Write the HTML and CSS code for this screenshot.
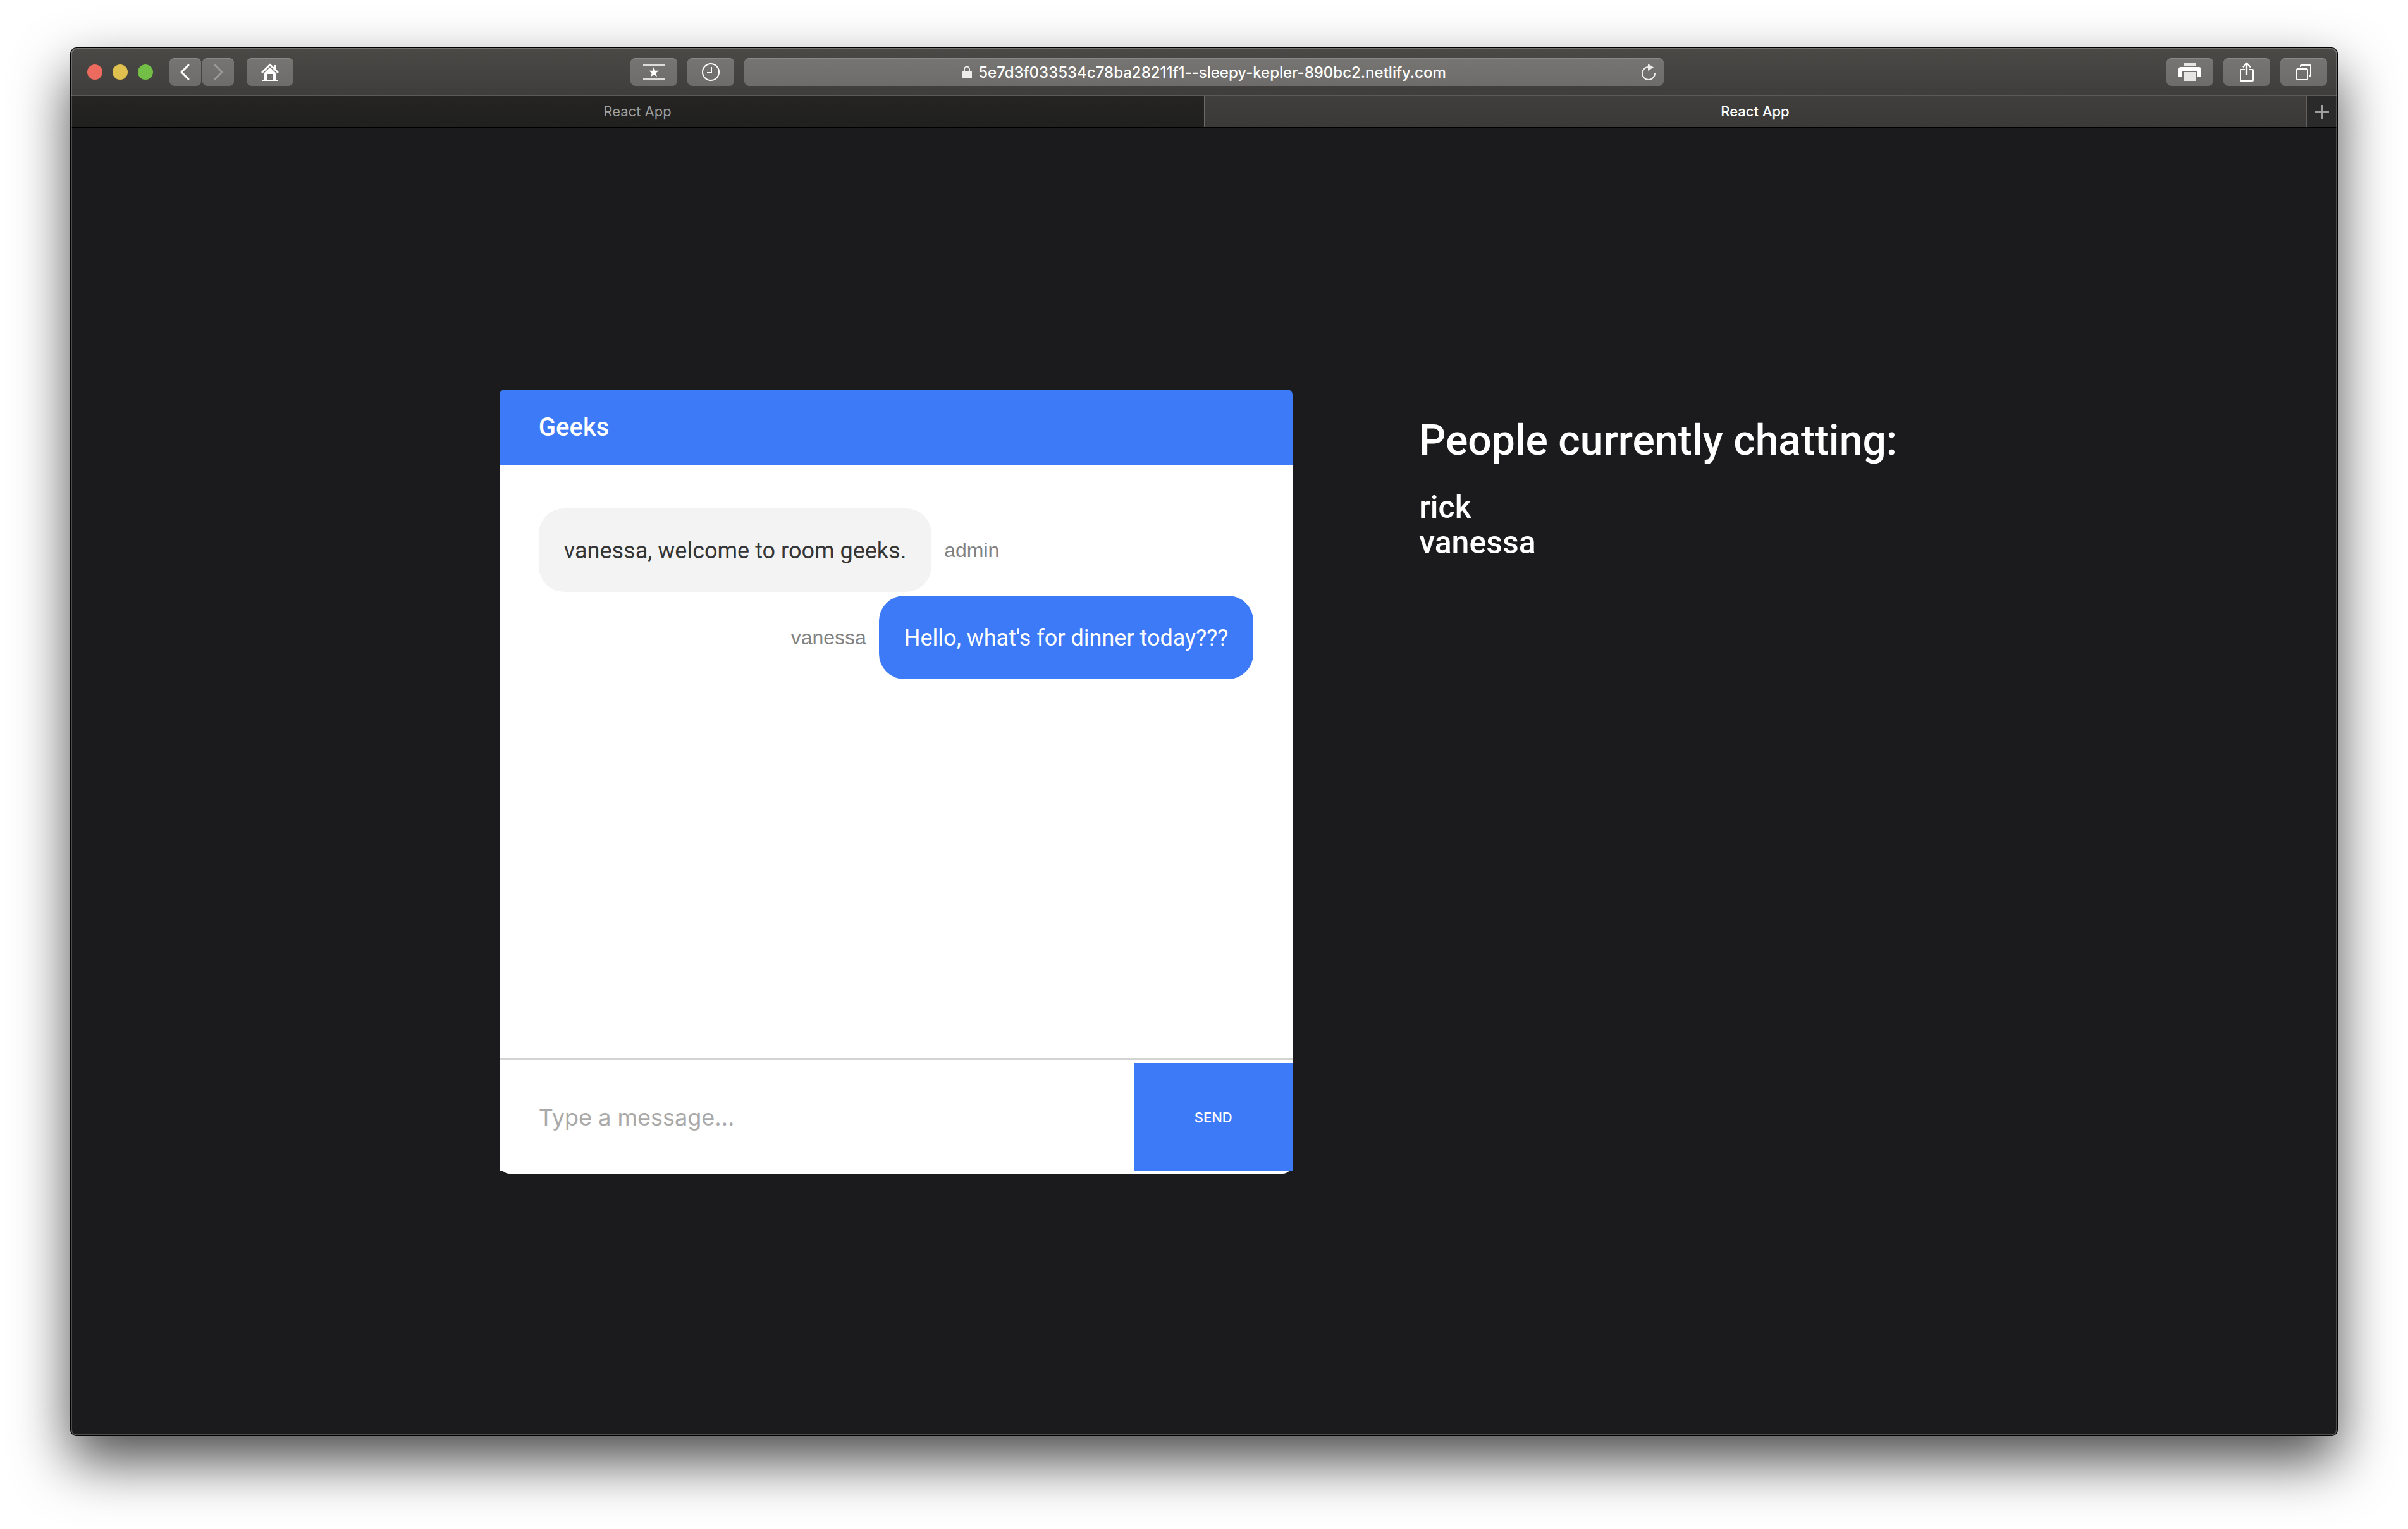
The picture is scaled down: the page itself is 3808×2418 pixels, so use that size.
FILE: index.html
```html
<!DOCTYPE html>
<html lang="en">
<head>
<meta charset="utf-8">
<title>React App</title>
<link rel="stylesheet" href="styles.css">
</head>
<body>
<div class="window">
  <header class="toolbar">
    <div class="toolbar-side">
      <div class="lights">
        <span class="light light-close"></span>
        <span class="light light-minimise"></span>
        <span class="light light-zoom"></span>
      </div>
      <div class="history-nav">
        <button class="tool tool-narrow" type="button" aria-label="Back">
          <svg width="28" height="28" viewBox="0 0 28 28"><path d="M19 3 8 14l11 11" fill="none" stroke="#fff" stroke-width="3" stroke-linecap="round" stroke-linejoin="round"/></svg>
        </button>
        <button class="tool tool-narrow" type="button" aria-label="Forward" disabled>
          <svg width="28" height="28" viewBox="0 0 28 28"><path d="M9 3 20 14 9 25" fill="none" stroke="#9c9b9a" stroke-width="3" stroke-linecap="round" stroke-linejoin="round"/></svg>
        </button>
      </div>
      <button class="tool" type="button" aria-label="Home">
        <svg width="28" height="28" viewBox="0 0 28 28"><path d="M2 14 14 2.500 26 14" fill="none" stroke="#fff" stroke-width="3" stroke-linecap="round"/><path d="M20 3h4v8l-4-4z" fill="#fff"/><path d="M14 6.500 24 16v10h2v2H2v-2h2V16z M10 17v9h8v-9z" fill="#fff" fill-rule="evenodd"/><circle cx="16.500" cy="21.500" r="0.800" fill="#fff"/></svg>
      </button>
      <button class="tool push-right" type="button" aria-label="Favourites">
        <svg width="34" height="28" viewBox="0 0 34 28"><path d="M0 3h34M0 25h34" stroke="#dddcdb" stroke-width="2"/><path d="m17 6 2 5.800h6l-4.800 3.700 1.800 6-5-3.500-5 3.500 1.800-6L9 11.800h6z" fill="#fff"/></svg>
      </button>
      <button class="tool" type="button" aria-label="History">
        <svg width="28" height="28" viewBox="0 0 28 28"><circle cx="14" cy="14" r="13" fill="none" stroke="#fff" stroke-width="2"/><path d="M15 6v9H8" fill="none" stroke="#fff" stroke-width="2"/></svg>
      </button>
    </div>
    <div class="address">
      <label class="address-field">
        <svg width="16" height="20" viewBox="0 0 16 20" aria-label="Secure"><path d="M4 9V5.500a4 4 0 0 1 8 0V9" fill="none" stroke="#ececeb" stroke-width="2"/><rect x="1" y="8" width="15" height="12" rx="1" fill="#ececeb"/></svg>
        <input class="address-input" type="text" aria-label="Address" value="5e7d3f033534c78ba28211f1--sleepy-kepler-890bc2.netlify.com">
      </label>
      <button class="reload" type="button" aria-label="Reload">
        <svg width="22" height="26" viewBox="0 0 22 26"><path d="M11 5a10 10 0 1 0 10 10v-1" fill="none" stroke="#ececeb" stroke-width="2"/><path d="M10 0v11l9-5.500z" fill="#ececeb"/></svg>
      </button>
    </div>
    <div class="toolbar-side toolbar-end">
      <button class="tool" type="button" aria-label="Print">
        <svg width="36" height="28" viewBox="0 0 36 28"><path d="M8 0h20v4H8zM8 14h20v14H8z" fill="#e6e5e4"/><path d="M0 22V10q0-4 4-4h28q4 0 4 4v12h-6V12H6v10z" fill="#fff"/></svg>
      </button>
      <button class="tool" type="button" aria-label="Share">
        <svg width="24" height="32" viewBox="0 0 24 32"><path d="M9 12H3q-1 0-1 1v16q0 1 1 1h18q1 0 1-1V13q0-1-1-1h-6" fill="none" stroke="#fff" stroke-width="2"/><path d="M12 21V3M6 8.500 12 2l6 6.500" fill="none" stroke="#fff" stroke-width="2.300"/></svg>
      </button>
      <button class="tool" type="button" aria-label="Tab overview">
        <svg width="24" height="26" viewBox="0 0 24 26"><rect x="1" y="8" width="17" height="17" rx="1.500" fill="none" stroke="#fff" stroke-width="2"/><path d="M7 5V3q0-1 1-1h14q1 0 1 1v15q0 1-1 1h-2" fill="none" stroke="#fff" stroke-width="2"/></svg>
      </button>
    </div>
  </header>
  <nav class="tabs" aria-label="Tabs">
    <button class="tab" type="button">React App</button>
    <div class="tabs-end">
      <button class="tab tab-active" type="button">React App</button>
      <button class="new-tab" type="button" aria-label="New tab">
        <svg width="22" height="22" viewBox="0 0 22 22"><path d="M11 0v22M0 11h22" stroke="#a09f9e" stroke-width="2"/></svg>
      </button>
    </div>
  </nav>
  <main class="page">
    <section class="chat">
      <h3 class="chat-title">Geeks</h3>
      <div class="messages">
        <div class="message">
          <p class="bubble">vanessa, welcome to room geeks.</p>
          <p class="sender">admin</p>
        </div>
        <div class="message message-own">
          <p class="sender">vanessa</p>
          <p class="bubble bubble-own">Hello, what's for dinner today???</p>
        </div>
      </div>
      <form class="composer">
        <input class="composer-input" type="text" placeholder="Type a message..." aria-label="Message">
        <button class="send" type="button">SEND</button>
      </form>
    </section>
    <aside class="people">
      <h1 class="people-title">People currently chatting:</h1>
      <ul class="people-list">
        <li>rick</li>
        <li>vanessa</li>
      </ul>
    </aside>
  </main>
</div>
</body>
</html>
```
FILE: styles.css
```css
* {
  box-sizing: border-box;
}

body {
  margin: 0;
  min-height: 100vh;
  padding: 75px 111px 147px;
  display: flex;
  background: #fff;
  font-family: Roboto, sans-serif;
}

h1,
h3,
p,
ul {
  margin: 0;
  padding: 0;
}

button,
input {
  margin: 0;
  padding: 0;
  border: 0;
  outline: 0;
  background: none;
  color: inherit;
  font-family: Inter, sans-serif;
}

svg {
  display: block;
  flex: none;
}

/* Browser window */
.window {
  flex: 1;
  position: relative;
  display: flex;
  flex-direction: column;
  border: 1px solid #000;
  border-radius: 10px;
  overflow: hidden;
  background: #1b1b1d;
  box-shadow: 0 40px 88px rgba(0, 0, 0, 0.7);
}

.window::after {
  content: "";
  position: absolute;
  inset: 0;
  border-radius: 9px;
  box-shadow: inset 0 0 0 2px rgba(255, 255, 255, 0.22);
  pointer-events: none;
}

.toolbar {
  display: flex;
  gap: 16px;
  height: 76px;
  padding: 2px 16px 0;
  align-items: center;
  border-bottom: 2px solid #5b5a58;
  background: linear-gradient(#4a4946, #3f3e3c);
}

.toolbar-side {
  flex: 1;
  display: flex;
  align-items: center;
  gap: 16px;
}

.toolbar-end {
  justify-content: flex-end;
}

.lights {
  display: flex;
  gap: 16px;
  margin: 0 10px;
}

.light {
  width: 24px;
  height: 24px;
  border-radius: 50%;
}

.light-close {
  background: #ed6a5e;
}

.light-minimise {
  background: #e0c04f;
}

.light-zoom {
  background: #72be47;
}

.history-nav {
  display: flex;
  gap: 2px;
  margin-right: 4px;
}

.tool,
.address {
  height: 44px;
  border-radius: 8px;
  background: linear-gradient(#767572, #6d6c6a);
  box-shadow: inset 0 1px 0 #8a8987;
}

.tool {
  width: 74px;
  display: flex;
  align-items: center;
  justify-content: center;
}

.tool-narrow {
  width: 50px;
}

.push-right {
  margin-left: auto;
}

.address {
  flex: 0 1 1454px;
  display: grid;
  grid-template-columns: 1fr auto 1fr;
  align-items: center;
  padding: 0 13px;
}

.address-field {
  grid-column: 2;
  display: flex;
  align-items: center;
  gap: 10px;
}

.address-input {
  field-sizing: content;
  padding-top: 2px;
  color: #fff;
  font-size: 24px;
  font-weight: 500;
  line-height: 32px;
}

.reload {
  justify-self: end;
}

.tabs {
  display: grid;
  grid-template-columns: 1fr 1fr;
  height: 50px;
  border-bottom: 1px solid #000;
}

.tabs-end {
  display: flex;
  border-left: 1px solid #6a6967;
}

.tab {
  flex: 1;
  padding-bottom: 2px;
  background: linear-gradient(#252422, #20201f);
  color: #a09f9e;
  font-size: 22px;
  font-weight: 400;
}

.tab-active {
  background: linear-gradient(#403f3d, #3a3937);
  color: #fff;
  font-weight: 500;
}

.new-tab {
  width: 50px;
  display: flex;
  align-items: center;
  justify-content: center;
  border-left: 2px solid #636261;
  background: #2b2a2a;
}

/* Chat page */
.page {
  flex: 1;
  display: flex;
  align-items: center;
  justify-content: center;
  gap: 200px;
  color: #fff;
}

.chat {
  width: 35%;
  height: 60%;
  display: flex;
  flex-direction: column;
  padding-bottom: 4px;
  border-radius: 16px;
  background: #fff;
}

.chat-title {
  padding: 0 62px;
  border-radius: 8px 8px 0 0;
  background: #3d7af7;
  font-size: 40px;
  font-weight: 500;
  line-height: 120px;
}

.messages {
  flex: 1;
  display: flex;
  flex-direction: column;
  gap: 6px;
  padding: 68px 62px 0;
}

.message {
  display: flex;
  align-items: center;
  gap: 20px;
}

.message-own {
  justify-content: flex-end;
}

.bubble {
  padding: 2px 40px 0;
  border-radius: 40px;
  background: #f3f3f3;
  color: #353535;
  font-size: 36px;
  line-height: 130px;
}

.bubble-own {
  background: #3d7af7;
  color: #fff;
}

.sender {
  color: #828282;
  font-family: "Liberation Sans", sans-serif;
  font-size: 32px;
  line-height: 40px;
}

.composer {
  display: flex;
  height: 179px;
  border-top: 4px solid #d3d3d3;
  background: #fff;
}

.composer-input {
  flex: 1;
  min-width: 0;
  padding: 4px 62px 0;
  font-size: 36px;
}

.composer-input::placeholder {
  color: #a9a9a9;
}

.send {
  width: 20%;
  margin-top: 4px;
  background: #3d7af7;
  color: #fff;
  font-size: 22px;
  font-weight: 500;
}

.people {
  min-width: 774px;
  height: 60%;
  padding-top: 43px;
}

.people-title {
  font-size: 66px;
  font-weight: 500;
  line-height: 75px;
}

.people-list {
  margin-top: 40px;
  list-style: none;
  font-size: 50px;
  font-weight: 500;
  line-height: 56px;
}
```
